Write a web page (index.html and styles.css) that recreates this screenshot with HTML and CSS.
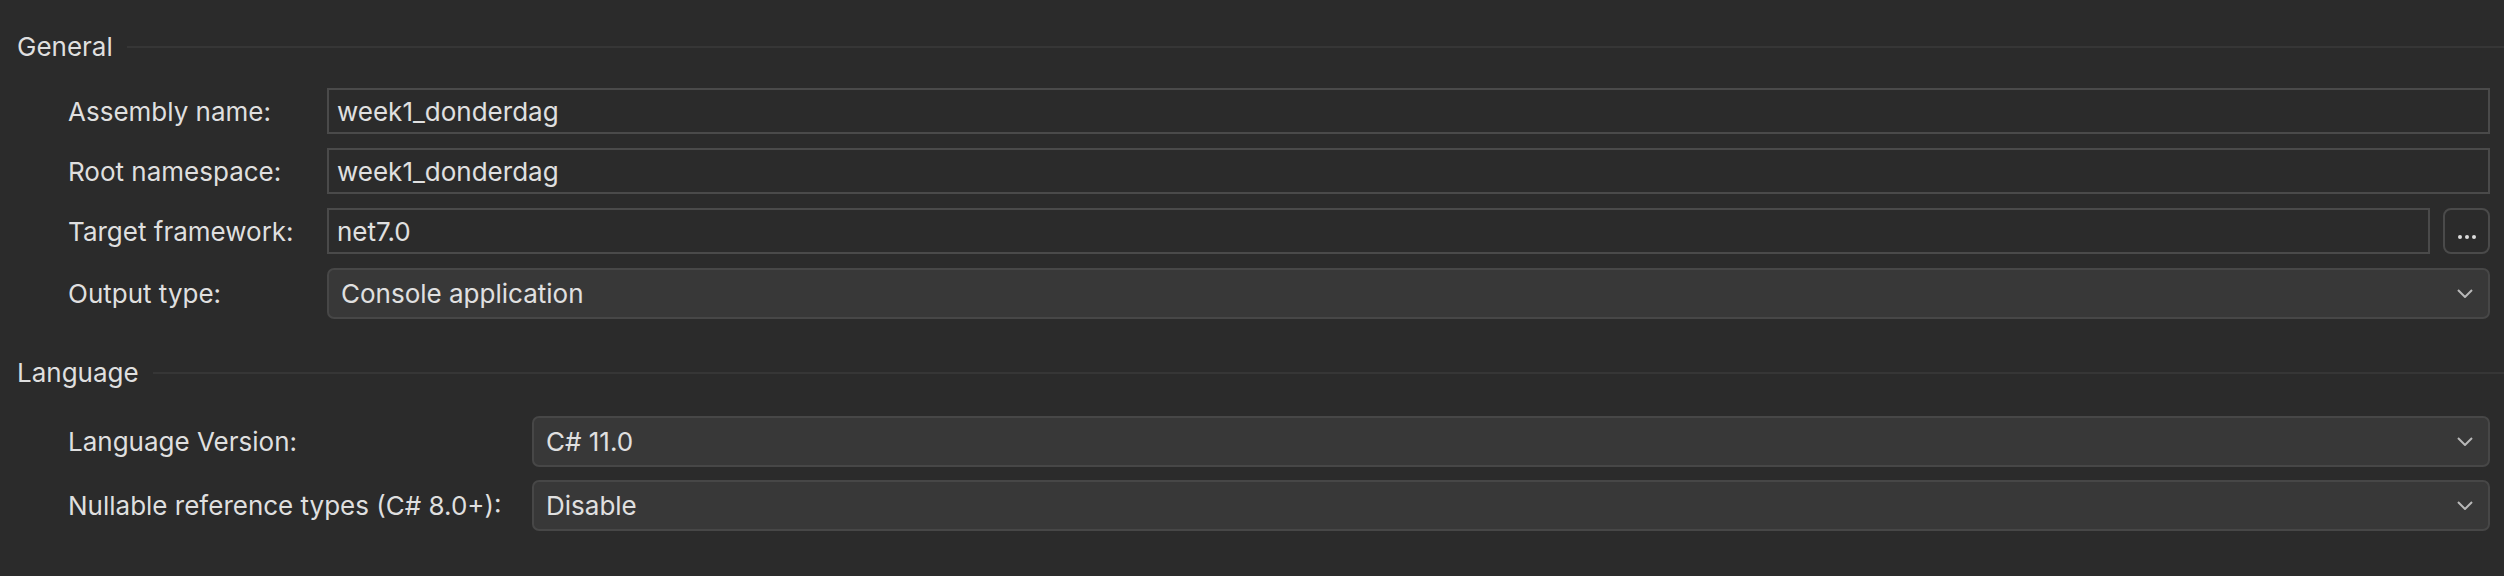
FILE: index.html
```html
<!DOCTYPE html>
<html lang="en">
<head>
<meta charset="utf-8">
<title>Project properties</title>
<link rel="stylesheet" href="styles.css">
</head>
<body>
<div class="page">
  <section class="group group-general">
    <div class="group-title"><span class="title-text">General</span><div class="rule"></div></div>
    <div class="rows rows-general">
      <div class="lbl">Assembly name:</div>
      <div class="field">week1_donderdag</div>
      <div class="lbl">Root namespace:</div>
      <div class="field">week1_donderdag</div>
      <div class="lbl">Target framework:</div>
      <div class="field-line">
        <div class="field grow">net7.0</div>
        <div class="more-btn">
          <svg width="18" height="4" viewBox="0 0 18 4"><circle cx="2" cy="2" r="2" fill="#dcdcdc"/><circle cx="9" cy="2" r="2" fill="#dcdcdc"/><circle cx="16" cy="2" r="2" fill="#dcdcdc"/></svg>
        </div>
      </div>
      <div class="lbl">Output type:</div>
      <div class="combo"><span class="combo-text">Console application</span>
        <svg class="chev" width="16" height="9" viewBox="0 0 16 9"><polyline points="1,1 8,8 15,1" fill="none" stroke="#b8b8b8" stroke-width="2"/></svg>
      </div>
    </div>
  </section>
  <section class="group group-language">
    <div class="group-title"><span class="title-text">Language</span><div class="rule"></div></div>
    <div class="rows rows-language">
      <div class="lbl">Language Version:</div>
      <div class="combo"><span class="combo-text">C# 11.0</span>
        <svg class="chev" width="16" height="9" viewBox="0 0 16 9"><polyline points="1,1 8,8 15,1" fill="none" stroke="#b8b8b8" stroke-width="2"/></svg>
      </div>
      <div class="lbl">Nullable reference types (C# 8.0+):</div>
      <div class="combo"><span class="combo-text">Disable</span>
        <svg class="chev" width="16" height="9" viewBox="0 0 16 9"><polyline points="1,1 8,8 15,1" fill="none" stroke="#b8b8b8" stroke-width="2"/></svg>
      </div>
    </div>
  </section>
</div>
</body>
</html>
```
FILE: styles.css
```css
html, body {
  margin: 0;
  padding: 0;
  background: #2b2b2b;
}
body {
  width: 2504px;
  height: 576px;
  overflow: hidden;
  font-family: Inter, "Noto Sans", "Liberation Sans", sans-serif;
  font-size: 26px;
  color: #dfdfdf;
}
.page {
  padding-top: 31px;
}
.group-title {
  display: flex;
  align-items: center;
  height: 32px;
  line-height: 32px;
  padding-left: 17px;
}
.title-text {
  white-space: nowrap;
}
.rule {
  flex: 1;
  height: 2px;
  background: #363636;
  margin-left: 14px;
}
.rows {
  display: grid;
  padding-left: 68px;
  padding-right: 14px;
  align-items: center;
}
.rows-general {
  grid-template-columns: 259px 1fr;
  row-gap: 14px;
  margin-top: 25px;
}
.group-language {
  margin-top: 38px;
}
.rows-language {
  grid-template-columns: 464px 1fr;
  row-gap: 13px;
  margin-top: 27px;
}
.lbl {
  white-space: nowrap;
}
.field {
  box-sizing: border-box;
  height: 46px;
  border: 2px solid #4a4a4a;
  background: #2b2b2b;
  padding-left: 8px;
  display: flex;
  align-items: center;
  color: #e0e0e0;
}
.field-line {
  display: flex;
  align-items: center;
  gap: 13px;
}
.grow {
  flex: 1;
}
.more-btn {
  box-sizing: border-box;
  width: 47px;
  height: 46px;
  border: 2px solid #4a4a4a;
  border-radius: 8px;
  display: flex;
  align-items: flex-end;
  justify-content: center;
  padding-bottom: 13px;
}
.combo {
  box-sizing: border-box;
  height: 51px;
  border: 2px solid #474747;
  border-radius: 7px;
  background: #383838;
  display: flex;
  align-items: center;
  padding-left: 12px;
  padding-right: 15px;
  color: #e0e0e0;
}
.combo-text {
  flex: 1;
}
.chev {
  display: block;
}
```
